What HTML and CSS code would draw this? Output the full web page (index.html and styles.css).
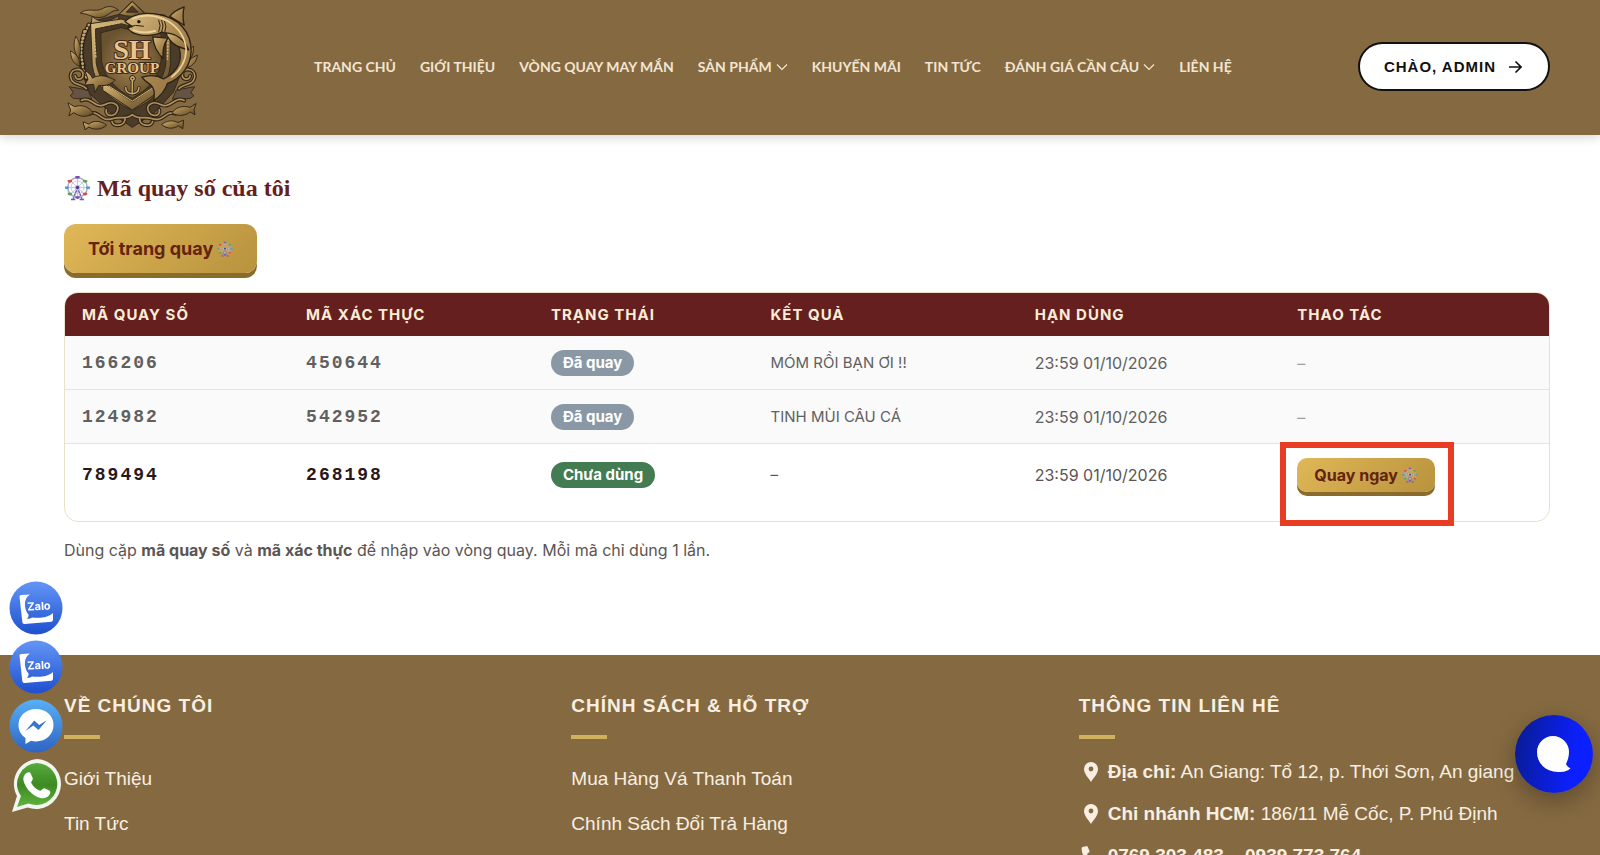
FILE: index.html
```html
<!DOCTYPE html>
<html lang="vi">
<head>
<meta charset="utf-8">
<meta name="viewport" content="width=device-width, initial-scale=1">
<title>Mã quay số của tôi</title>
<link rel="stylesheet" href="styles.css">
</head>
<body>
<svg class="defs" aria-hidden="true">
  <defs>
    <symbol id="wheel" viewBox="0 0 24 24">
      <path d="M12 12 8 22M12 12l4 10M6 22.600h4M14 22.600h4" stroke="#6d62a8" stroke-width="1.400" fill="none"/>
      <circle cx="12" cy="11.500" r="9" fill="none" stroke="#a9abc8" stroke-width="1.400"/>
      <circle cx="12" cy="11.500" r="6" fill="none" stroke="#c3c5db" stroke-width=".8"/>
      <path d="M12 2.500v18M3 11.500h18M5.600 5.100l12.800 12.800M18.400 5.100 5.600 17.900" stroke="#b5b8d2" stroke-width=".7"/>
      <circle cx="12" cy="11.500" r="2.600" fill="#c9c6e4"/>
      <circle cx="12" cy="11.500" r="1.600" fill="#493b91"/>
      <path d="M10 1h4v1.600q-2 1.800-4 0zM10 19.600h4v1.600q-2 1.800-4 0z" fill="#7553b5"/>
      <path d="M3 4.600h4v1.600q-2 1.800-4 0zM17 16.400h4V18q-2 1.800-4 0z" fill="#d84a52"/>
      <path d="M17 4.600h4v1.600q-2 1.800-4 0zM3 16.400h4V18q-2 1.800-4 0z" fill="#57a560"/>
      <path d="M.4 10.600h3.600v1.600q-1.800 1.800-3.600 0zM20 10.600h3.600v1.600q-1.800 1.800-3.600 0z" fill="#4a9cd0"/>
    </symbol>
    <symbol id="chevron" viewBox="0 0 12 8"><path d="m1 1.500 5 5 5-5" fill="none" stroke="currentColor" stroke-width="1.200"/></symbol>
    <symbol id="pin" viewBox="0 0 14 20"><path fill="currentColor" fill-rule="evenodd" d="M7 0a7 7 0 0 0-7 7c0 4.800 4.800 9.300 7 13 2.200-3.700 7-8.200 7-13a7 7 0 0 0-7-7Zm0 4.600a2.400 2.400 0 1 1 0 4.800 2.400 2.400 0 0 1 0-4.800Z"/></symbol>
    <symbol id="handset" viewBox="0 0 20 20"><path fill="currentColor" d="M5.200.2c.6-.3 1.200 0 1.500.6l1.700 4c.2.500.1 1-.3 1.400L6 8c1.200 2.600 3.300 4.700 6 6l1.800-2.200c.4-.4.900-.5 1.400-.3l4 1.700c.6.3.900.9.700 1.500l-1 3.800c-.1.600-.6.900-1.200.9C8.400 19.400.6 11.600.6 2.300c0-.6.400-1.100.9-1.200Z"/></symbol>
    <linearGradient id="zaloBlue" x1="0" y1="0" x2="0" y2="1"><stop offset="0" stop-color="#6495f5"/><stop offset="1" stop-color="#1e50d0"/></linearGradient>
    <linearGradient id="messBlue" x1="0" y1="0" x2="0" y2="1"><stop offset="0" stop-color="#58aff4"/><stop offset="1" stop-color="#2e64c4"/></linearGradient>
    <linearGradient id="waGreen" x1="0" y1="0" x2="0" y2="1"><stop offset="0" stop-color="#57aa3c"/><stop offset=".5" stop-color="#3d8a22"/><stop offset="1" stop-color="#5fb43d"/></linearGradient>
    <symbol id="zalo" viewBox="0 0 54 54">
      <circle cx="27" cy="27" r="26.500" fill="url(#zaloBlue)"/>
      <path fill="#fff" d="M10.500 15.500q0-1.500 1.500-1.500l9-.6c-6.500 3.600-6.500 14-1.500 20.100.3 2-.5 3-1.500 4 1.500.4 3.300.1 5-1 8 .8 16 .3 21-4.500v6.500q0 2-1.500 2.200L15.500 43q-2 .1-2.200-2Z"/>
      <text x="30" y="29" text-anchor="middle" transform="rotate(-3 30 26)" class="zalo-word">Zalo</text>
    </symbol>
  </defs>
</svg>

<header class="site-header">
  <a class="logo" href="#" aria-label="SH Group">
    <svg viewBox="72 0 408 405">
      <defs>
        <linearGradient id="gold" x1="0" y1="0" x2="1" y2="1"><stop offset="0" stop-color="#dcbd82"/><stop offset=".45" stop-color="#a08049"/><stop offset="1" stop-color="#584426"/></linearGradient>
        <linearGradient id="shark" x1="0" y1="0" x2="1" y2="1"><stop offset="0" stop-color="#d9bb7f"/><stop offset=".5" stop-color="#a98750"/><stop offset="1" stop-color="#8d6d3c"/></linearGradient>
        <radialGradient id="plate"><stop offset="0" stop-color="#a88750"/><stop offset="1" stop-color="#69522f"/></radialGradient>
      </defs>
      <g stroke="#33291b" stroke-width="3" fill="url(#gold)">
        <path d="M280 4 238 44 155 66l-22 30-12 110 30 80 60 55 69 47 70-47 55-60 32-80-8-105-50-50-61-6Z" fill="#4b3c29"/>
        <path d="M280 5 240 43q40 14 80 0Z"/>
        <path d="m280 18-18 19h36Z" fill="#4a3a25"/>
        <path d="M122 40c20-18 45-2 66-13 15-10 35-10 50 4-25 0-30 19-54 22-24 3-36-11-62-13Z"/>
        <path d="M158 50c20 20 50 18 82-3l-4 18-84 24Z"/>
        <path d="M153 72 246 58q34 14 62 0l88 20v120q-8 90-116 138-112-52-122-138Z"/>
        <path d="M168 88 246 72q34 12 62 0l74 20v100q-8 80-102 128-98-50-110-128Z" fill="#463821"/>
        <path d="M184 100 246 84q34 12 62 0l60 20v82q-8 70-88 114-84-46-94-114Z" fill="url(#plate)"/>
        <path d="M190 250 280 310l90-62v25l-90 62-90-60Z"/>
        <path d="M208 262 280 308l74-48" fill="none" stroke="#d8b878"/>
      </g>
      <g fill="none" stroke-linecap="round">
        <path d="M148 75q-28 50-22 105t18 60M134 95q-18 55-3 105" stroke="#241d14" stroke-width="13"/>
        <path d="M148 75q-28 50-22 105t18 60M134 95q-18 55-3 105" stroke="#c3a167" stroke-width="7" stroke-dasharray="2 9"/>
        <path d="M160 84 245 68M162 90l7 85M390 90l-3 90" stroke="#d3b478" stroke-width="5" stroke-dasharray="3 7"/>
      </g>
      <g fill="url(#gold)" stroke="#382c1a" stroke-width="3">
        <path d="M108 110c18 28 16 48 9 70-16-23-18-44-9-70Z"/><path d="M92 155c22 12 29 27 28 48-20-8-28-26-28-48Z"/>
        <path d="M466 140c-14 14-18 28-14 46 12-14 16-28 14-46Z"/><path d="M478 168c-20 8-30 20-29 38 18-8 28-21 29-38Z"/>
        <path d="M88 264 145 274l12 28-56-2-10-9 10-8Z" fill="#655443"/><path d="m470 264-56 10-12 28 54-2 12-9-10-8Z" fill="#655443"/>
      </g>
      <g fill="none" stroke-linecap="round">
        <path d="M92 232c0-25 38-28 38-5 0 18-24 18-24 4m-14 4c5 27 35 18 48 35M470 232c0-25-38-28-38-5 0 18 24 18 24 4m14 4c-5 27-35 18-48 35M125 306c30-15 42 28 72 12 22-12 44 0 38 18-8 23-40 19-34-2M438 306c-30-15-42 28-72 12-22-12-44 0-38 18 8 23 40 19 34-2M150 346c28-12 34 28 72 15 23-8 38 5 58-12 20 17 35 4 58 12 38 13 44-27 72-15M258 360c0 25-35 28-40 10M302 360c0 25 35 28 40 10" stroke="#2f2518" stroke-width="12"/>
        <path d="M92 232c0-25 38-28 38-5 0 18-24 18-24 4m-14 4c5 27 35 18 48 35M470 232c0-25-38-28-38-5 0 18 24 18 24 4m14 4c-5 27-35 18-48 35M125 306c30-15 42 28 72 12 22-12 44 0 38 18-8 23-40 19-34-2M438 306c-30-15-42 28-72 12-22-12-44 0-38 18 8 23 40 19 34-2M150 346c28-12 34 28 72 15 23-8 38 5 58-12 20 17 35 4 58 12 38 13 44-27 72-15M258 360c0 25-35 28-40 10M302 360c0 25 35 28 40 10" stroke="#b18f59" stroke-width="5"/>
        <path d="M280 246v34m-20-13c0 24 40 24 40 0m-20-33a5 5 0 1 0 1 0" stroke="#2b2116" stroke-width="10"/>
        <path d="M280 246v34m-20-13c0 24 40 24 40 0m-20-33a5 5 0 1 0 1 0" stroke="#c9a86b" stroke-width="5"/>
      </g>
      <g fill="url(#shark)" stroke="#2b2116" stroke-width="4" stroke-linejoin="round">
        <path d="M394 50q14-18 44-29-7 26 0 56Z"/>
        <path d="M342 112q4 40 32 66-4-34 14-62Z"/>
        <path d="M258 66c22-24 62-30 100-22 62 10 102 52 101 112-1 44-30 82-72 98-6 18-16 36-42 52 4-26 2-40-12-50-10-6-18-12-24-21 24-8 50-4 66 5 34-16 54-44 51-76-3-36-26-60-56-66-18 10-48 12-68 8-22-4-32-12-36-22l14-3Z"/>
        <path d="M382 100c30 2 56 20 70 52-32-8-58-18-70-52Z"/>
      </g>
      <g fill="url(#gold)" stroke="#30261a" stroke-width="3" stroke-linejoin="round">
        <path d="M136 216c10 3 19 13 23 22 23-15 49-4 69 6-17 14-25 18-50 16l-12 22-4-25-27 2 10-18Z"/>
        <path d="m84 313 20 12c20-7 42-3 58 20-22 14-42 11-60-2l-15 10 5-18Z"/><path d="m130 371 18 7c15-13 37-10 54 3-14 14-37 16-54 6l-12 8Z"/>
        <path d="m474 315-18 12c-22-7-44 0-56 17 22 12 42 8 57-3l14 9-3-16Z"/><path d="m436 366-17 7c-17-9-35-5-50 6 18 15 36 14 51 4l14 9Z"/>
      </g>
      <g fill="none" stroke="#2b2116" stroke-width="3"><path d="M267 82q22-8 48-2M360 60q9 17 0 38M369 61q9 17 0 38M378 64q8 16 1 34"/></g>
      <path d="M282 56q50-20 106 8 52 32 56 88-2 50-44 82M284 92q32 12 66 2" fill="none" stroke="#edd39a" stroke-width="5" stroke-linecap="round"/>
      <circle cx="300" cy="66" r="5" fill="#17120c"/>
      <text class="logo-initials" x="279" y="179" text-anchor="middle">SH</text>
      <text class="logo-name" x="279" y="223" text-anchor="middle">GROUP</text>
    </svg>
  </a>
  <nav class="main-nav" aria-label="Menu chính">
    <a href="#">TRANG CHỦ</a>
    <a href="#">GIỚI THIỆU</a>
    <a href="#">VÒNG QUAY MAY MẮN</a>
    <a href="#">SẢN PHẨM <svg><use href="#chevron"/></svg></a>
    <a href="#">KHUYẾN MÃI</a>
    <a href="#">TIN TỨC</a>
    <a href="#">ĐÁNH GIÁ CẦN CÂU <svg><use href="#chevron"/></svg></a>
    <a href="#">LIÊN HỆ</a>
  </nav>
  <a class="account" href="#">CHÀO, ADMIN
    <svg viewBox="0 0 14 14"><path d="M1 7h11.500M7.500 1.500 13 7l-5.500 5.500" fill="none" stroke="currentColor" stroke-width="1.600"/></svg>
  </a>
</header>

<main class="content">
  <h1><svg><use href="#wheel"/></svg>Mã quay số của tôi</h1>
  <a class="gold-btn gold-btn-large" href="#">Tới trang quay <svg><use href="#wheel"/></svg></a>
  <div class="table-card">
    <table>
      <colgroup><col class="c1"><col class="c2"><col class="c3"><col class="c4"><col class="c5"><col class="c6"></colgroup>
      <thead>
        <tr><th scope="col">MÃ QUAY SỐ</th><th scope="col">MÃ XÁC THỰC</th><th scope="col">TRẠNG THÁI</th><th scope="col">KẾT QUẢ</th><th scope="col">HẠN DÙNG</th><th scope="col">THAO TÁC</th></tr>
      </thead>
      <tbody>
        <tr class="used"><td class="code">166206</td><td class="code">450644</td><td><span class="badge">Đã quay</span></td><td>MÓM RỒI BẠN ƠI !!</td><td class="date">23:59 01/10/2026</td><td class="none">–</td></tr>
        <tr class="used"><td class="code">124982</td><td class="code">542952</td><td><span class="badge">Đã quay</span></td><td>TINH MÙI CÂU CÁ</td><td class="date">23:59 01/10/2026</td><td class="none">–</td></tr>
        <tr class="fresh"><td class="code">789494</td><td class="code">268198</td><td><span class="badge badge-new">Chưa dùng</span></td><td>–</td><td class="date">23:59 01/10/2026</td><td class="action"><button class="gold-btn" type="button">Quay ngay <svg><use href="#wheel"/></svg></button><span class="highlight"></span></td></tr>
      </tbody>
    </table>
  </div>
  <p class="note">Dùng cặp <strong>mã quay số</strong> và <strong>mã xác thực</strong> để nhập vào vòng quay. Mỗi mã chỉ dùng 1 lần.</p>
</main>

<footer class="site-footer">
  <section>
    <h2>VỀ CHÚNG TÔI</h2>
    <ul class="links"><li><a href="#">Giới Thiệu</a></li><li><a href="#">Tin Tức</a></li></ul>
  </section>
  <section>
    <h2>CHÍNH SÁCH &amp; HỖ TRỢ</h2>
    <ul class="links"><li><a href="#">Mua Hàng Vá Thanh Toán</a></li><li><a href="#">Chính Sách Đổi Trả Hàng</a></li></ul>
  </section>
  <section>
    <h2>THÔNG TIN LIÊN HÊ</h2>
    <ul class="contact">
      <li><svg><use href="#pin"/></svg><span><strong>Địa chỉ:</strong> An Giang: Tổ 12, p. Thới Sơn, An giang</span></li>
      <li><svg><use href="#pin"/></svg><span><strong>Chi nhánh HCM:</strong> 186/11 Mễ Cốc, P. Phú Định</span></li>
      <li><svg><use href="#handset"/></svg><strong>0769 303 483 – 0939 773 764</strong></li>
    </ul>
  </section>
</footer>

<div class="social">
  <a href="#" aria-label="Zalo 1"><svg><use href="#zalo"/></svg></a>
  <a href="#" aria-label="Zalo 2"><svg><use href="#zalo"/></svg></a>
  <a href="#" aria-label="Messenger"><svg viewBox="0 0 54 54">
    <circle cx="27" cy="27" r="26.500" fill="url(#messBlue)"/>
    <path fill="#fff" d="M27 10C17 10 9.500 16.800 9.500 26c0 5.500 2.700 10 7 13v6l5.600-3.200c1.600.4 3.200.6 4.900.6 10 0 17.500-7 17.500-16.400S37 10 27 10Z"/>
    <path fill="#3576cf" d="m16.500 32 8.700-10.500 5 4.500 7.500-4.700L29.500 31l-5.200-4.400Z"/>
  </svg></a>
  <a href="#" aria-label="WhatsApp"><svg viewBox="0 0 54 54">
    <path fill="#f3f5f1" d="M28 1a25 25 0 1 1-9.500 48.500L3 54l5-16A25 25 0 0 1 28 1Z"/>
    <path fill="url(#waGreen)" d="M28 5a21 21 0 1 1-8.500 40.500L8 49l4-11A21 21 0 0 1 28 5Z"/>
    <path fill="#fff" d="M17.500 15c1.700-1 3.500-1 4.300.8l2 4.400c.5 1.300-2 3.500-1.600 4.600 2 4 5 6.500 8.800 8 1.200.4 3-3 4.300-2.500l5 2.300c1.700.8 1 3.400-.3 5-3.500 3.800-8.300 3.200-12.500 1C21 35 16.500 29.500 14.600 23c-.8-3 .3-6.400 2.900-8Z"/>
  </svg></a>
</div>
<button class="chat" type="button" aria-label="Mở trò chuyện">
  <svg viewBox="0 0 36 38"><path fill="#fff" d="M17 1a16 16 0 0 1 16 16c0 5-1.500 9-3 12 .8 1.800 2.200 3.200 4.500 4.300-3.500 3.700-9 3.900-12.500 3.700C9 36.800 1 28 1 17A16 16 0 0 1 17 1Z"/></svg>
</button>
</body>
</html>
```
FILE: styles.css
```css
* { box-sizing: border-box; }

:root {
  --brown: #856a41;
  --maroon: #651f1f;
  --cream: #f8efe2;
}

body {
  margin: 0;
  background: #fff;
  font-family: Inter, "Noto Sans", sans-serif;
  color: #5b5553;
}

a { color: inherit; text-decoration: none; }
ul { list-style: none; margin: 0; padding: 0; }
.defs { position: absolute; width: 0; height: 0; }

.site-header {
  display: flex;
  align-items: center;
  min-height: 135px;
  padding: 0 50px 2px 64px;
  background: var(--brown);
  box-shadow: 0 2px 10px rgba(0, 0, 0, .18);
}

.logo { width: 134px; height: 133px; margin-right: 116px; flex: none; }
.logo svg { display: block; width: 100%; height: 100%; }
.logo-initials,
.logo-name {
  font-family: "Liberation Serif", serif;
  font-weight: bold;
  fill: #e8c48e;
  stroke: #3a2a1b;
  stroke-width: 6px;
  paint-order: stroke;
}
.logo-initials { font-size: 86px; }
.logo-name { font-size: 46px; }

.main-nav {
  display: flex;
  flex: 1;
  gap: 24px;
  font: bold 14px/20px Lato, sans-serif;
  color: #f3e5d2;
  white-space: nowrap;
}
.main-nav a { display: flex; align-items: center; gap: 4px; }
.main-nav svg { width: 12px; height: 8px; }

.account {
  display: flex;
  align-items: center;
  gap: 12px;
  padding: 0 26px 0 24px;
  height: 49px;
  border: 2px solid #111;
  border-radius: 25px;
  background: #fff;
  color: #111;
  font: bold 15px/20px "Liberation Sans", sans-serif;
  letter-spacing: 1px;
  white-space: nowrap;
}
.account svg { width: 14px; height: 14px; }

.content { padding: 37px 50px 93px 64px; }

h1 {
  display: flex;
  align-items: center;
  gap: 6px;
  margin: 0 0 20px;
  color: var(--maroon);
  font: bold 24px/32px "Liberation Serif", serif;
}
h1 svg { width: 27px; height: 26px; }

.gold-btn {
  display: inline-flex;
  align-items: center;
  gap: 4px;
  padding: 0 17px;
  height: 34px;
  border: 0;
  border-radius: 10px;
  background: linear-gradient(135deg, #e0b858, #b8923d);
  box-shadow: 0 4px 0 #8b6b2b;
  color: #65220f;
  font: bold 16px/20px Inter, sans-serif;
  white-space: nowrap;
}
.gold-btn svg { width: 16px; height: 16px; opacity: .85; }
.gold-btn-large {
  height: 49px;
  padding: 0 24px;
  border-radius: 12px;
  box-shadow: 0 5px 0 #8b6b2b;
  font-size: 18px;
}

.table-card {
  margin-top: 19px;
  border: 1px solid #e9e2c8;
  border-radius: 14px;
}
table { width: 100%; border-collapse: separate; border-spacing: 0; table-layout: fixed; }
.c1 { width: 15.1%; }
.c2 { width: 16.5%; }
.c3 { width: 14.8%; }
.c4 { width: 17.8%; }
.c5 { width: 17.7%; }
th, td { padding: 0 17px; text-align: left; }
th {
  height: 43px;
  background: var(--maroon);
  color: #fbecd5;
  font-size: 15px;
  letter-spacing: 1px;
}
th:first-child { border-top-left-radius: 13px; }
th:last-child { border-top-right-radius: 13px; }
td { height: 54px; font-size: 15px; line-height: 20px; }
.used td { background: #fafafa; border-bottom: 1px solid #e7e4d8; color: #606060; }
.fresh td { height: 77px; padding-bottom: 16px; }
td.date,
td.none { font-size: 16px; }
td.code { font: bold 18px/20px "Liberation Mono", monospace; letter-spacing: 2px; }
.fresh .code { color: #2a1719; }
.used td.none { color: #a0a0a0; }

.badge {
  display: inline-block;
  padding: 3px 12px;
  border-radius: 13px;
  background: #8998a4;
  color: #fff;
  font-size: 15px;
  font-weight: bold;
}
.badge-new { background: #437b52; }

.action { position: relative; }
.highlight {
  position: absolute;
  top: -2px;
  left: 0;
  width: 174px;
  height: 84px;
  border: 6px solid #e93d23;
  pointer-events: none;
}

.note { margin: 16px 0 0; font-size: 16px; line-height: 24px; }

.site-footer {
  display: grid;
  grid-template-columns: repeat(3, 1fr);
  gap: 32px;
  padding: 38px 46px 24px 64px;
  background: var(--brown);
  color: var(--cream);
  font: 19px/24px "Liberation Sans", sans-serif;
  white-space: nowrap;
}
h2 { margin: 0; font-size: 19px; line-height: 26px; letter-spacing: 1px; }
h2::after {
  content: "";
  display: block;
  width: 36px;
  height: 4px;
  margin-top: 16px;
  background: #ceb05d;
}
.links { display: grid; gap: 21px; margin-top: 28px; }
.contact { display: grid; gap: 18px; margin-top: 21px; }
.contact li { display: flex; align-items: center; gap: 7px; padding-left: 2px; }
.contact svg { width: 20px; height: 20px; flex: none; }

.social { position: fixed; left: 9px; bottom: 43px; display: grid; gap: 5px; }
.social a { display: block; width: 54px; height: 54px; }
.social svg { display: block; width: 54px; height: 54px; }
.zalo-word { font: bold 11px Inter, sans-serif; fill: #fff; }

.chat {
  position: fixed;
  right: 7px;
  bottom: 62px;
  display: grid;
  place-items: center;
  width: 78px;
  height: 78px;
  padding: 0;
  border: 0;
  border-radius: 50%;
  background: linear-gradient(100deg, #091c9c 10%, #0c20ff 75%);
  box-shadow: 0 8px 24px rgba(0, 0, 0, .3);
}
.chat svg { width: 36px; height: 38px; }
```
